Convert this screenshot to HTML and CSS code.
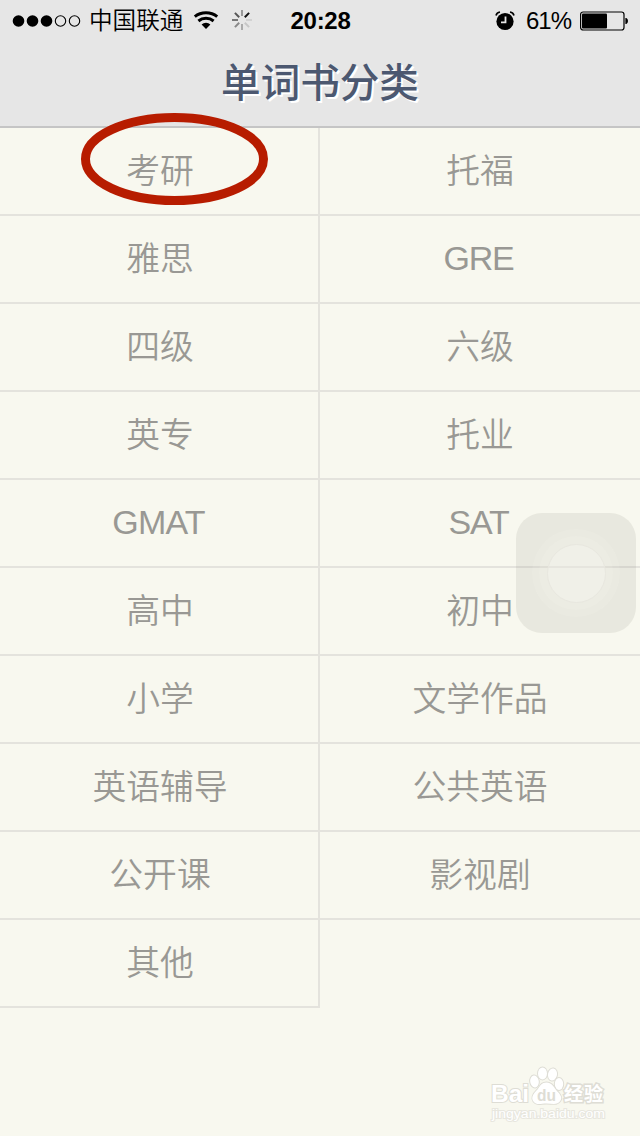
FILE: index.html
```
<!DOCTYPE html>
<html lang="zh-CN">
<head>
    <meta charset="UTF-8">
    <meta name="viewport" content="width=device-width, initial-scale=1.0">
    <title>单词书分类</title>
    <link rel="stylesheet" href="styles.css">
</head>
<body>
    <header class="header">
        <div class="status-bar">
            <div class="status-left">
                <svg class="signal" width="70" height="14" viewBox="0 0 70 14">
                    <circle cx="6.5" cy="7" r="5.8"/>
                    <circle cx="20.5" cy="7" r="5.8"/>
                    <circle cx="34.5" cy="7" r="5.8"/>
                    <circle class="empty" cx="48.5" cy="7" r="5.2"/>
                    <circle class="empty" cx="62.5" cy="7" r="5.2"/>
                </svg>
                <span class="carrier">中国联通</span>
                <svg class="wifi" width="26" height="20" viewBox="0 0 26 20">
                    <path class="arc" d="M1.8 6.6a16.5 14.5 0 0 1 22.4 0"/>
                    <path class="arc" d="M5.4 11a11.2 10 0 0 1 15.2 0"/>
                    <path d="M13 19l-4.4-4.6a6.4 6.4 0 0 1 8.8 0z"/>
                </svg>
                <svg class="spinner" width="22" height="22" viewBox="0 0 22 22">
                    <path stroke="#999" d="M11 1v6"/>
                    <path stroke="#111" d="M18.1 3.9l-4.3 4.3"/>
                    <path stroke="#d2d2d2" d="M21 11h-6"/>
                    <path stroke="#c6c6c6" d="M18.1 18.1l-4.3-4.3"/>
                    <path stroke="#aaa" d="M11 21v-6"/>
                    <path stroke="#888" d="M3.9 18.1l4.3-4.3"/>
                    <path stroke="#777" d="M1 11h6"/>
                    <path stroke="#555" d="M3.9 3.9l4.3 4.3"/>
                </svg>
            </div>
            <span class="time">20:28</span>
            <div class="status-right">
                <svg class="alarm" width="20" height="20" viewBox="0 0 20 20">
                    <circle cx="10" cy="10.5" r="8.6"/>
                    <path class="bell" d="M1 4.5Q1.7 1.6 5 1M19 4.5Q18.3 1.6 15 1"/>
                    <path class="hands" d="M10.5 5.5v5.8h-4.5"/>
                </svg>
                <span class="percent">61%</span>
                <svg class="battery" width="50" height="20" viewBox="0 0 50 20">
                    <rect class="case" x="1.6" y="1" width="43.4" height="18" rx="2.5"/>
                    <rect x="3" y="2.5" width="25" height="15" rx="1"/>
                    <path d="M46.4 7h1q1.6 0.8 1.6 3t-1.6 3h-1z"/>
                </svg>
            </div>
        </div>
        <h1 class="title">单词书分类</h1>
    </header>

    <main class="categories">
        <div class="category">考研
            <svg class="marker" width="188" height="94" viewBox="0 0 188 94">
                <ellipse cx="94.5" cy="47" rx="89" ry="41.5"/>
            </svg>
        </div>
        <div class="category">托福</div>
        <div class="category">雅思</div>
        <div class="category latin">GRE</div>
        <div class="category">四级</div>
        <div class="category">六级</div>
        <div class="category">英专</div>
        <div class="category">托业</div>
        <div class="category latin">GMAT</div>
        <div class="category latin">SAT</div>
        <div class="category">高中</div>
        <div class="category">初中</div>
        <div class="category">小学</div>
        <div class="category">文学作品</div>
        <div class="category">英语辅导</div>
        <div class="category">公共英语</div>
        <div class="category">公开课</div>
        <div class="category">影视剧</div>
        <div class="category">其他</div>
    </main>

    <!-- AssistiveTouch -->
    <div class="assistive">
        <div class="ring ring-outer">
            <div class="ring ring-middle">
                <div class="ring ring-inner"></div>
            </div>
        </div>
    </div>

    <svg class="watermark" width="120" height="58" viewBox="0 0 120 58">
        <g class="logo">
            <text x="1" y="37" font-size="24" textLength="38" lengthAdjust="spacingAndGlyphs">Bai</text>
            <ellipse cx="44.5" cy="16.5" rx="4.3" ry="6" transform="rotate(-8 44.5 16.5)"/>
            <ellipse cx="52.5" cy="8.5" rx="4.5" ry="6"/>
            <ellipse cx="62.5" cy="9.5" rx="4.5" ry="6" transform="rotate(10 62.5 9.5)"/>
            <ellipse cx="69" cy="19" rx="4.2" ry="6"/>
            <path d="M56.5 17.5c5 0 7 4 10 8 4 4 6 7 4 10-3 5-8 3-14 3s-10 2-13-2 0-8 4-12c3-4 4-7 9-7z"/>
            <text class="du" x="47" y="35.5" font-size="17" textLength="19" lengthAdjust="spacingAndGlyphs">du</text>
            <text class="cn" x="74" y="36" font-size="19" textLength="39">经验</text>
        </g>
        <text class="url" x="2" y="53" font-size="12" textLength="113" lengthAdjust="spacingAndGlyphs">jingyan.baidu.com</text>
    </svg>
</body>
</html>
```
FILE: styles.css
```
* {
    margin: 0;
    padding: 0;
    box-sizing: border-box;
}

body {
    position: relative;
    width: 640px;
    height: 1136px;
    overflow: hidden;
    background: #f8f8ef;
    font-family: "Liberation Sans", "Noto Sans CJK SC", sans-serif;
}

.header {
    height: 128px;
    background: #e6e6e6;
    border-bottom: 2px solid #c5c5c5;
}

/* Status bar */
.status-bar {
    display: grid;
    grid-template-columns: 1fr 61px 1fr;
    align-items: center;
    height: 40px;
    padding: 0 11px 0 12px;
    color: #000;
    font-size: 23.6px;
    line-height: 40px;
}

.status-left,
.status-right {
    display: flex;
    align-items: center;
    height: 40px;
}

.status-right {
    justify-content: flex-end;
}

.signal .empty {
    fill: none;
    stroke: #000;
    stroke-width: 1.1;
}

.carrier {
    width: 94px;
    margin-left: 7px;
    padding-top: 1px;
    font-weight: 350;
    white-space: nowrap;
}

.wifi {
    margin-left: 10px;
    margin-bottom: 1px;
}

.wifi .arc {
    fill: none;
    stroke: #000;
    stroke-width: 3;
}

.spinner {
    margin-left: 12px;
    margin-bottom: 1px;
}

.spinner path {
    stroke-width: 2;
}

.time {
    padding-top: 1px;
    font-size: 24px;
    font-weight: bold;
    letter-spacing: -0.3px;
    text-align: center;
    white-space: nowrap;
}

.alarm {
    margin-right: -1px;
}

.alarm .bell {
    fill: none;
    stroke: #000;
    stroke-width: 1.6;
}

.alarm .hands {
    fill: none;
    stroke: #e6e6e6;
    stroke-width: 1.8;
}

.percent {
    width: 45px;
    margin: 0 8px 0 12px;
    padding-top: 1px;
    font-size: 24px;
    letter-spacing: -1px;
    white-space: nowrap;
}

.battery .case {
    fill: none;
    stroke: #000;
    stroke-width: 1.2;
}

.title {
    height: 86px;
    color: #4c5870;
    font-size: 39.6px;
    font-weight: 500;
    line-height: 86px;
    text-align: center;
    text-shadow: 2px 2px 0 #fff;
}

/* Categories */
.categories {
    display: grid;
    grid-template-columns: 320px 320px;
    grid-auto-rows: 88px;
}

.category {
    position: relative;
    border-bottom: 2px solid #e4e3dd;
    color: #999894;
    font-size: 33.8px;
    font-weight: 350;
    line-height: 87px;
    text-align: center;
}

.category:nth-child(odd) {
    padding-left: 2px;
    border-right: 2px solid #e4e3dd;
}

.latin {
    padding-right: 3px;
    font-size: 34px;
    letter-spacing: -1.2px;
    line-height: 85px;
}

.category.latin:nth-child(odd) {
    padding-left: 0;
    padding-right: 1px;
    letter-spacing: -0.8px;
}

.marker {
    position: absolute;
    top: -16px;
    left: 80px;
    z-index: 1;
}

.marker ellipse {
    fill: none;
    stroke: #b71c00;
    stroke-width: 9;
}

.assistive {
    position: absolute;
    top: 513px;
    left: 516px;
    display: flex;
    align-items: center;
    justify-content: center;
    width: 120px;
    height: 120px;
    border-radius: 26px;
    background: rgba(120, 120, 110, 0.12);
}

.ring {
    display: flex;
    align-items: center;
    justify-content: center;
    border-radius: 50%;
    background: rgba(255, 255, 250, 0.11);
}

.ring-outer {
    width: 88px;
    height: 88px;
}

.ring-middle {
    width: 74px;
    height: 74px;
}

.ring-inner {
    width: 59px;
    height: 59px;
    border: 1px solid #e8e7df;
    background: rgba(255, 255, 250, 0.22);
}

/* Watermark */
.watermark {
    position: absolute;
    top: 1065px;
    left: 490px;
    fill: #fff;
    stroke: #deddd5;
    stroke-width: 2;
    paint-order: stroke;
    font-weight: bold;
}

.watermark .du {
    fill: #deddd5;
    stroke: none;
}

.watermark .cn {
    stroke-width: 3;
}

.watermark .url {
    stroke: #e8e7df;
    font-weight: normal;
}
```
